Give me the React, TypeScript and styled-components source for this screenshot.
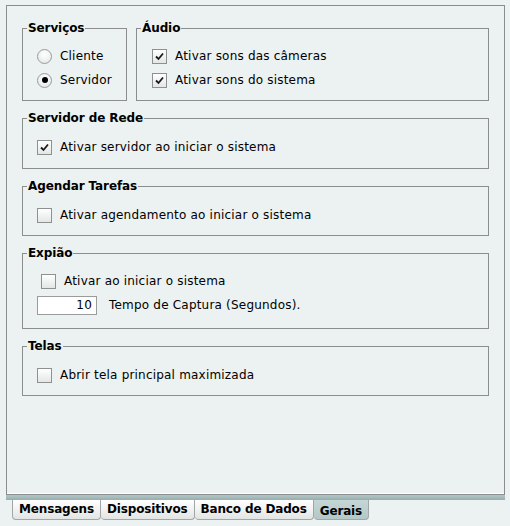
import * as React from 'react'
import styled, { createGlobalStyle } from 'styled-components'

const GlobalStyle = createGlobalStyle`
  html, body {
    margin: 0;
    padding: 0;
    background: #ecf1f1;
  }
  body {
    font-family: "DejaVu Sans", Tahoma, Verdana, sans-serif;
    font-size: 12px;
    letter-spacing: 0.2px;
    color: #000;
  }
`

const Page = styled.div`
  width: 510px;
  height: 526px;
  padding: 5px 5px 0 6px;
  box-sizing: border-box;
  display: flex;
  flex-direction: column;
`

const Panel = styled.div`
  height: 490px;
  flex: none;
  box-sizing: border-box;
  border: 1px solid #8b8d8d;
  box-shadow: inset 0 -1px 0 #ffffff;
  padding: 14px 15px 0 15px;
  display: flex;
  flex-direction: column;
  align-items: stretch;
  gap: 9px;
`

const TopRow = styled.div`
  display: flex;
  gap: 9px;
`

const Fieldset = styled.fieldset<{ $width?: number; $grow?: boolean }>`
  margin: 0;
  padding: 0;
  min-width: 0;
  border: 1px solid #8c8e8e;
  box-sizing: border-box;
  flex: ${p => (p.$grow ? '1 1 0' : 'none')};
  ${p => (p.$width ? `width: ${p.$width}px;` : '')}
`

const Legend = styled.legend`
  margin-left: 4px;
  padding: 0 1px;
  font-weight: bold;
  letter-spacing: -0.1px;
  line-height: 16px;
`

type Pad = { $padTop: number; $padBottom: number; $padLeft: number }
const Body = styled.div<Pad>`
  display: flex;
  flex-direction: column;
  gap: 4px;
  padding: ${p => p.$padTop}px 14px ${p => p.$padBottom}px ${p => p.$padLeft}px;
`

const Row = styled.label<{ $indent?: number }>`
  display: flex;
  align-items: center;
  gap: 8px;
  height: 20px;
  padding-left: ${p => p.$indent ?? 0}px;
  white-space: nowrap;
`

const Box = styled.span`
  width: 15px;
  height: 15px;
  box-sizing: border-box;
  border: 1px solid #8f9191;
  background: linear-gradient(#ffffff, #e4e6e6);
  display: inline-flex;
  align-items: center;
  justify-content: center;
  flex: none;
`

const Radio = styled.span<{ $on?: boolean }>`
  width: 15px;
  height: 15px;
  box-sizing: border-box;
  border: 1px solid #9a9c9c;
  border-radius: 50%;
  background: radial-gradient(circle at 50% 35%, #ffffff, #e2e4e4);
  display: inline-flex;
  align-items: center;
  justify-content: center;
  flex: none;
  &::after {
    content: '';
    width: 6px;
    height: 6px;
    border-radius: 50%;
    background: ${p => (p.$on ? '#000' : 'transparent')};
  }
`

const NumberInput = styled.span`
  width: 60px;
  height: 19px;
  box-sizing: border-box;
  border: 1px solid #9a9c9c;
  background: #fff;
  text-align: right;
  padding-right: 4px;
  line-height: 17px;
  flex: none;
`

const InputRow = styled.div`
  display: flex;
  align-items: center;
  gap: 12px;
  height: 20px;
`

const TabBar = styled.div`
  height: 5px;
  flex: none;
  background: linear-gradient(#b4c7c7, #97adad);
`

const Tabs = styled.div`
  display: flex;
  padding-left: 6px;
`

const Tab = styled.div<{ $active?: boolean }>`
  height: 20px;
  box-sizing: border-box;
  padding: ${p => (p.$active ? '3px 6px 0' : '1px 6px 0')};
  border: 1px solid #a3a6a6;
  border-top: none;
  border-radius: 0 0 4px 4px;
  font-weight: bold;
  letter-spacing: -0.15px;
  line-height: 16px;
  background: ${p =>
    p.$active
      ? 'linear-gradient(#c5d6d6, #b4c8c8)'
      : 'linear-gradient(#ffffff, #e3e5e5)'};
  & + & {
    border-left: none;
  }
`

const Check: React.FC<{ on?: boolean }> = ({ on }) => (
  <Box>
    {on && (
      <svg width="11" height="11" viewBox="0 0 11 11">
        <polyline points="2,5.5 4.5,8 9,2.5" fill="none" stroke="#1a1a1a" strokeWidth="1.8" />
      </svg>
    )}
  </Box>
)

type GroupProps = {
  title: string;
  width?: number;
  grow?: boolean;
  padTop?: number;
  padBottom?: number;
  padLeft?: number;
  children: React.ReactNode;
}
const Group: React.FC<GroupProps> = ({ title, width, grow, padTop = 11, padBottom = 11, padLeft = 14, children }) => (
  <Fieldset $width={width} $grow={grow}>
    <Legend>{title}</Legend>
    <Body $padTop={padTop} $padBottom={padBottom} $padLeft={padLeft}>{children}</Body>
  </Fieldset>
)

export default function App() {
  return (
    <>
      <GlobalStyle />
      <Page>
        <Panel>
          <TopRow>
            <Group title="Serviços" width={105} padTop={10} padBottom={10}>
              <Row><Radio />Cliente</Row>
              <Row><Radio $on />Servidor</Row>
            </Group>
            <Group title="Áudio" grow padTop={10} padBottom={10} padLeft={15}>
              <Row><Check on />Ativar sons das câmeras</Row>
              <Row><Check on />Ativar sons do sistema</Row>
            </Group>
          </TopRow>
          <Group title="Servidor de Rede">
            <Row><Check on />Ativar servidor ao iniciar o sistema</Row>
          </Group>
          <Group title="Agendar Tarefas" padBottom={10}>
            <Row><Check />Ativar agendamento ao iniciar o sistema</Row>
          </Group>
          <Group title="Expião" padTop={10} padBottom={13}>
            <Row $indent={4}><Check />Ativar ao iniciar o sistema</Row>
            <InputRow>
              <NumberInput>10</NumberInput>
              Tempo de Captura (Segundos).
            </InputRow>
          </Group>
          <Group title="Telas" padBottom={10}>
            <Row><Check />Abrir tela principal maximizada</Row>
          </Group>
        </Panel>
        <TabBar />
        <Tabs>
          <Tab>Mensagens</Tab>
          <Tab>Dispositivos</Tab>
          <Tab>Banco de Dados</Tab>
          <Tab $active>Gerais</Tab>
        </Tabs>
      </Page>
    </>
  )
}
